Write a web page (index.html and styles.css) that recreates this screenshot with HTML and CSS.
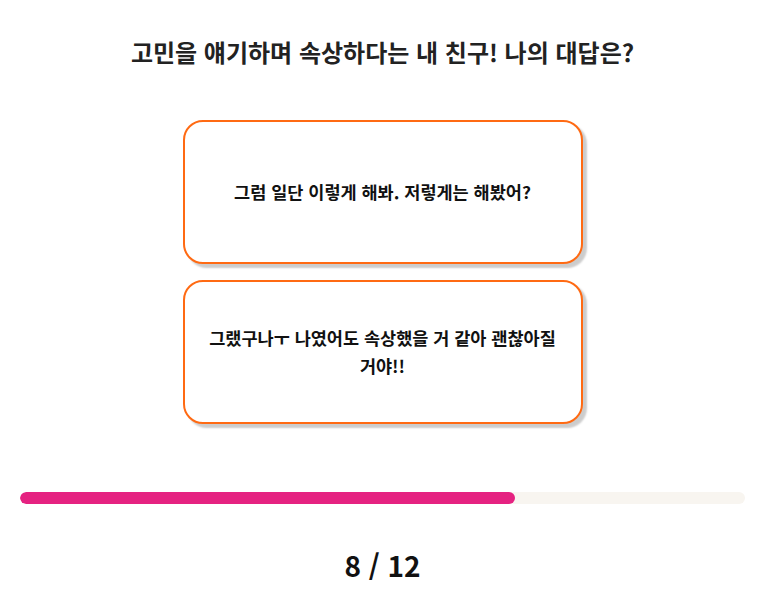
FILE: index.html
```html
<!DOCTYPE html>
<html lang="ko">
<head>
    <meta charset="UTF-8">
    <meta name="viewport" content="width=device-width, initial-scale=1.0">
    <title>친구 테스트</title>
    <link rel="stylesheet" href="styles.css">
</head>
<body>
    <div class="quiz-container">
        <h1 class="question">고민을 얘기하며 속상하다는 내 친구! 나의 대답은?</h1>

        <div class="answer-list">
            <button type="button" class="answer-button">그럼 일단 이렇게 해봐. 저렇게는 해봤어?</button>
            <button type="button" class="answer-button">그랬구나ㅜ 나였어도 속상했을 거 같아 괜찮아질 거야!!</button>
        </div>

        <div class="progress-track">
            <div class="progress-fill" style="width: 68.3%;"></div>
        </div>

        <p class="progress-count">8 / 12</p>
    </div>
</body>
</html>
```

FILE: styles.css
```css
body {
    font-family: 'Noto Sans CJK KR', 'Noto Sans', sans-serif;
    margin: 0;
    background-color: #fff;
    color: #222;
}

.quiz-container {
    padding: 36px 16px 0 20px;
    display: flex;
    flex-direction: column;
    align-items: center;
}

.question {
    font-size: 24px;
    font-weight: 700;
    color: #222;
    margin: 0 0 52px;
    line-height: 32px;
    text-align: center;
}

.answer-list {
    display: flex;
    flex-direction: column;
    gap: 16px;
}

.answer-button {
    width: 400px;
    height: 144px;
    box-sizing: border-box;
    padding: 0 20px;
    background-color: #fff;
    border: 2px solid #ff6a13;
    border-radius: 20px;
    box-shadow: 4px 4px 2px rgba(0, 0, 0, 0.2);
    font-family: inherit;
    font-size: 17.5px;
    font-weight: 700;
    line-height: 28px;
    color: #111;
    word-break: keep-all; /* 한글 단어 단위 줄바꿈 */
    cursor: pointer;
}

.progress-track {
    align-self: stretch;
    height: 12px;
    margin-top: 68px;
    background-color: #f8f5f0;
    border-radius: 6px;
    overflow: hidden;
}

.progress-fill {
    height: 100%;
    background-color: #e52281;
    border-radius: 6px;
}

.progress-count {
    margin: 45px 0 0;
    font-size: 28px;
    font-weight: 700;
    color: #111;
    line-height: 32px;
}
```
